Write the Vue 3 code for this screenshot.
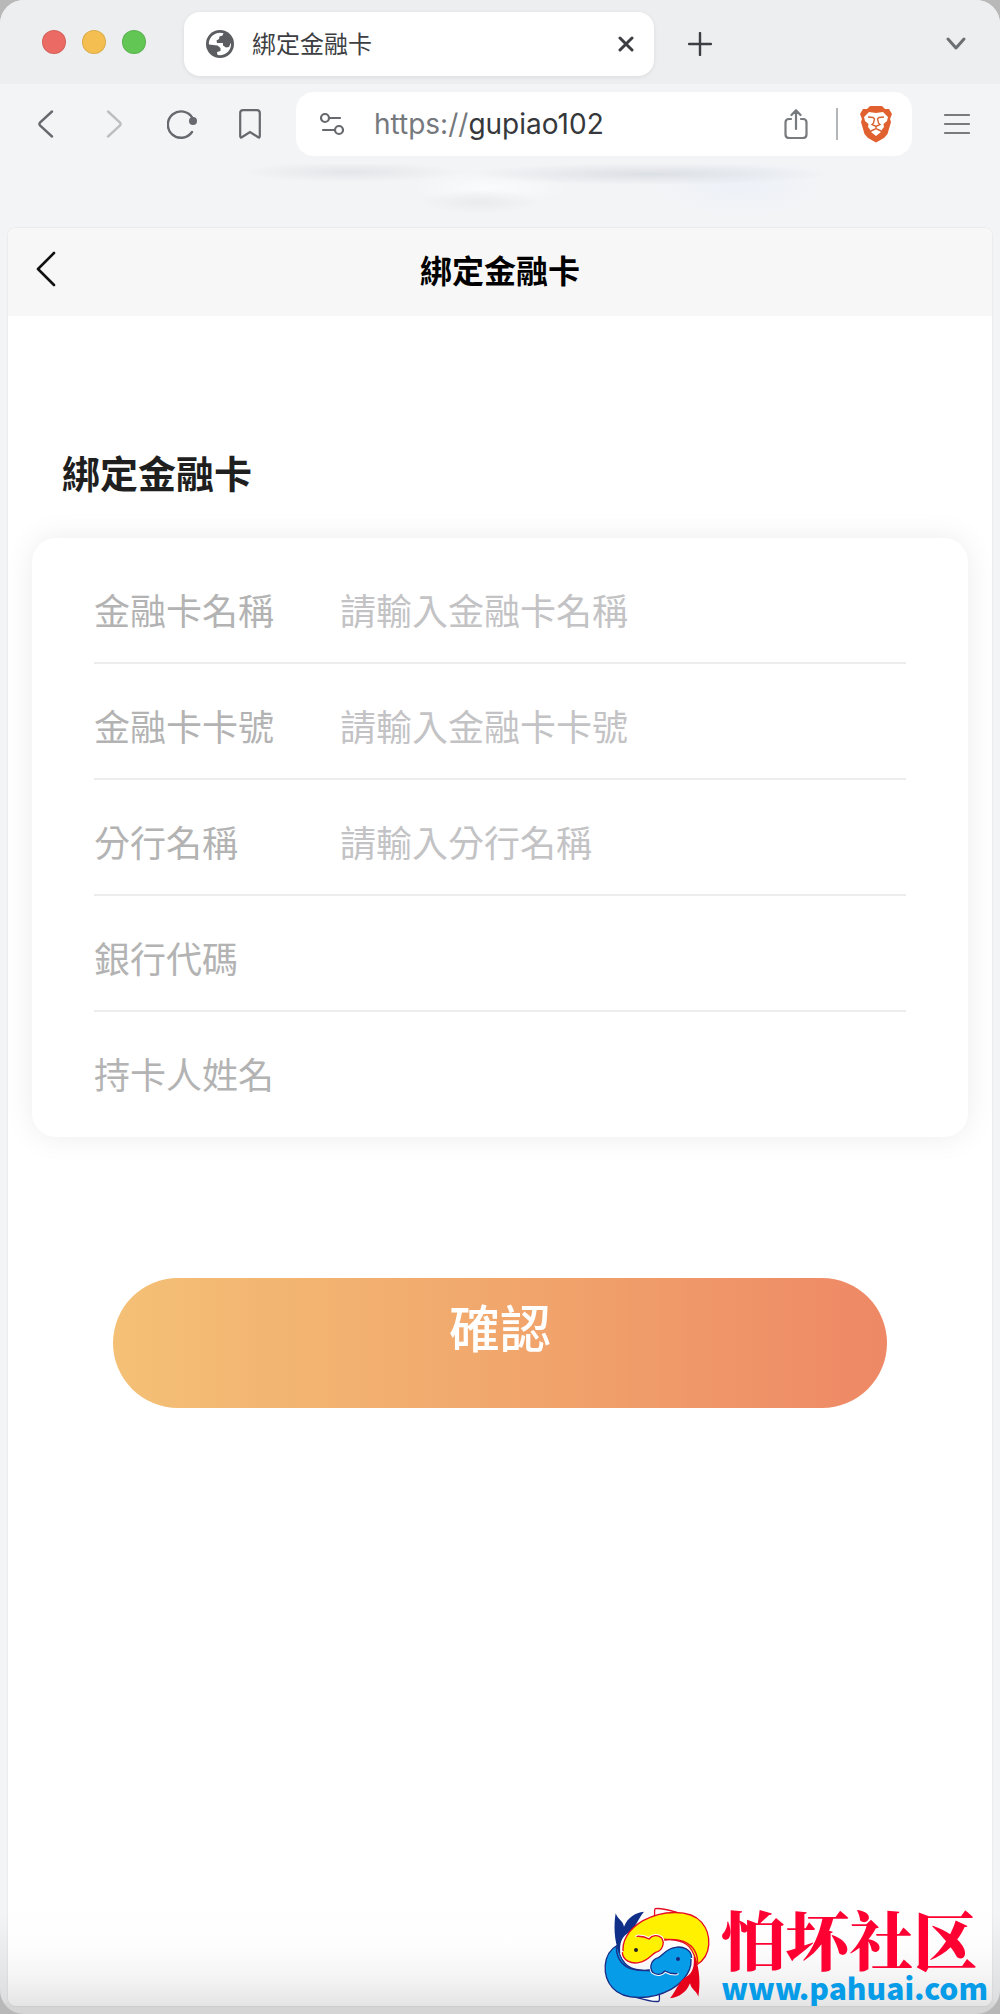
<script setup>
import { reactive } from 'vue'

const fields = reactive([
  { id: 'card-name', label: '金融卡名稱', placeholder: '請輸入金融卡名稱', value: '' },
  { id: 'card-number', label: '金融卡卡號', placeholder: '請輸入金融卡卡號', value: '' },
  { id: 'branch-name', label: '分行名稱', placeholder: '請輸入分行名稱', value: '' },
  { id: 'bank-code', label: '銀行代碼', placeholder: '', value: '' },
  { id: 'holder-name', label: '持卡人姓名', placeholder: '', value: '' }
])
</script>

<template>
  <div class="desktop">
    <div class="window">
      <div class="tabs">
        <div class="lights">
          <button class="light red" aria-label="Close"></button>
          <button class="light yellow" aria-label="Minimize"></button>
          <button class="light green" aria-label="Zoom"></button>
        </div>
        <div class="tab">
          <svg class="globe" width="28" height="28" viewBox="0 0 28 28">
            <circle cx="14" cy="14" r="14" fill="#5b5d61" />
            <path d="M2.800 13C3.500 7 8.500 2.800 14 2.800L17.500 3.300L16.500 5.500L13.500 6.500L13 9L10.500 10.500L11 13H17V15.500L20 17.500L23 17L25 12.500C25.800 19 21 25 14.500 25.200L11.500 25L11 22L14.500 21L14.500 18L11.500 15.500L7 15L3 14.500Z" fill="#fff" />
          </svg>
          <span class="tab-title">綁定金融卡</span>
          <button class="icon" aria-label="Close tab">
            <svg width="16" height="16" viewBox="0 0 16 16"><path d="M2 2L14 14M14 2L2 14" stroke="#3c3e42" stroke-width="3" stroke-linecap="round" /></svg>
          </button>
        </div>
        <button class="icon plus" aria-label="New tab">
          <svg width="24" height="24" viewBox="0 0 24 24"><path d="M12 1V23M1 12H23" stroke="#3c3e42" stroke-width="2.400" stroke-linecap="round" /></svg>
        </button>
        <button class="icon more" aria-label="Search tabs">
          <svg width="20" height="14" viewBox="0 0 20 14"><path d="M2 2L10 11L18 2" fill="none" stroke="#6b6f72" stroke-width="3" stroke-linecap="round" stroke-linejoin="round" /></svg>
        </button>
      </div>

      <div class="toolbar">
        <div class="nav">
          <button class="icon" aria-label="Back">
            <svg width="16" height="28" viewBox="0 0 16 28"><path d="M14 1.500L2 12.500Q.8 14 2 15.500L14 26.500" fill="none" stroke="#66696d" stroke-width="2.400" stroke-linecap="round" /></svg>
          </button>
          <button class="icon" aria-label="Forward">
            <svg width="16" height="28" viewBox="0 0 16 28"><path d="M2 1.500L14 12.500Q15.200 14 14 15.500L2 26.500" fill="none" stroke="#bcbec1" stroke-width="2.400" stroke-linecap="round" /></svg>
          </button>
          <button class="icon" aria-label="Reload">
            <svg width="30" height="30" viewBox="0 0 30 30"><path d="M25.500 9A13.200 13.200 0 1 0 25 23" fill="none" stroke="#66696d" stroke-width="2.400" stroke-linecap="round" /><circle cx="26" cy="12" r="4" fill="#66696d" /></svg>
          </button>
          <button class="icon" aria-label="Bookmark">
            <svg width="22" height="30" viewBox="0 0 22 30"><path d="M1.200 27V4Q1.200 1.200 4 1.200H18Q20.800 1.200 20.800 4V27Q20.800 29.500 18.800 28L11 23L3.200 28Q1.200 29.500 1.200 27Z" fill="none" stroke="#66696d" stroke-width="2.200" /></svg>
          </button>
        </div>
        <div class="address">
          <svg class="tune" width="24" height="24" viewBox="0 0 24 24" fill="none" stroke="#66696d" stroke-width="2.200"><circle cx="5" cy="6" r="4" /><path d="M9 6H20M3 18H15" stroke-linecap="round" /><circle cx="19" cy="18" r="4" /></svg>
          <span class="url"><span class="scheme">https://</span>gupiao102</span>
          <button class="icon" aria-label="Share">
            <svg width="24" height="30" viewBox="0 0 24 30" fill="none" stroke="#777b7e" stroke-width="2.200" stroke-linecap="round" stroke-linejoin="round"><path d="M7 10H5Q1.500 10 1.500 13.500V25.500Q1.500 29 5 29H19Q22.500 29 22.500 25.500V13.500Q22.500 10 19 10H17M12 20V1.500M7.500 6L12 1.200L16.500 6" /></svg>
          </button>
          <span class="divider"></span>
          <button class="icon" aria-label="Shields">
            <svg width="32" height="38" viewBox="0 0 32 38">
              <path d="M10 1H22L25 4L29 4L32 9L30 14L31 17L27.500 29L24 33L16 37.500L8 33L4.500 29L1 17L2 14L0 9L3 4H7Z" fill="#e0602f" />
              <path d="M9 7L16 8L23 7L28 12L27 16L23.500 19L24 22L22 24.500L21 27L16 31L11 27L10 24.500L8 22L8.500 19L5 16L4 12Z" fill="#fff" />
              <path d="M8 12L13 12.500L14.500 14L13.500 18L12 19.500L16 21.500L20 19.500L18.500 18L17.500 14L19 12.500L24 12M16 21V24M10 26.500L16 23.500L22 26.500" fill="none" stroke="#d9632f" stroke-width="1.400" />
            </svg>
          </button>
        </div>
        <button class="icon menu" aria-label="Menu">
          <svg width="26" height="22" viewBox="0 0 26 22"><path d="M1 2H25M1 11H25M1 20H25" stroke="#777b7e" stroke-width="2.200" stroke-linecap="round" /></svg>
        </button>
      </div>
      <div class="haze"></div>

      <main class="page">
        <header class="page-head">
          <button class="icon" aria-label="返回">
            <svg width="20" height="36" viewBox="0 0 20 36"><path d="M18 2L2 18L18 34" fill="none" stroke="#111" stroke-width="2.600" stroke-linecap="round" stroke-linejoin="round" /></svg>
          </button>
          <h1>綁定金融卡</h1>
        </header>
        <form @submit.prevent>
          <h2>綁定金融卡</h2>
          <div class="card">
            <div v-for="field in fields" :key="field.id" class="row">
              <label :for="field.id">{{ field.label }}</label>
              <input :id="field.id" v-model="field.value" type="text" :placeholder="field.placeholder" />
            </div>
          </div>
          <button class="submit" type="submit">確認</button>
        </form>
      </main>
    </div>

    <a class="brand" href="#">
      <svg width="120" height="114" viewBox="0 0 360 342">
        <defs>
          <path id="fin" d="M118 292C145 300 170 307 185 304C191 300 183 280 190 262" />
          <path id="body" d="M62 135C14 162 16 228 46 263C82 305 168 298 222 268C264 244 290 205 280 166C262 146 228 148 208 160C192 170 185 188 166 206C150 215 105 213 84 190C70 174 64 158 62 135Z" />
          <path id="jaw" d="M58 142C58 180 82 203 112 209C135 214 155 210 172 213" />
          <path id="head" d="M284 172C282 148 258 138 235 142C208 146 198 165 184 173C162 179 156 202 167 217C178 226 194 225 204 213C214 219 224 222 240 221" />
          <path id="tail" d="M66 158C51 120 50 75 56 40C62 58 78 62 81 80C92 52 114 38 141 35C123 55 115 88 90 101C74 112 67 130 70 160Z" />
        </defs>
        <g stroke-width="4" stroke-linejoin="round" stroke-linecap="round">
          <g stroke="#1b2d86">
            <use href="#fin" fill="#fff" />
            <use href="#body" fill="#079ce8" />
            <use href="#jaw" fill="none" />
            <use href="#tail" fill="#102f88" stroke="none" />
            <use href="#head" fill="none" stroke="#fff" stroke-width="10" />
            <use href="#head" fill="#079ce8" />
            <circle cx="243" cy="177" r="4" fill="#111d57" />
          </g>
          <g stroke="#e60c22" transform="rotate(180 180 165)">
            <use href="#fin" fill="#fff" />
            <use href="#body" fill="#fff100" />
            <use href="#jaw" fill="none" />
            <use href="#tail" fill="#e60019" stroke="none" />
            <use href="#head" fill="none" stroke="#fff" stroke-width="10" />
            <use href="#head" fill="#fff100" />
            <circle cx="243" cy="180" r="4" fill="#222" stroke="#222" />
          </g>
        </g>
      </svg>
      <span class="brand-text">
        <span class="brand-name" lang="zh-Hans">怕坏社区</span>
        <span class="brand-url">www.pahuai.com</span>
      </span>
    </a>
  </div>
</template>

<style>
body {
  margin: 0;
  background: #c4c4c4;
}
</style>

<style scoped>
* {
  box-sizing: border-box;
}

.desktop {
  position: relative;
  min-height: 100vh;
  display: flex;
  background: #b9b8b8;
  font-family: "Noto Sans CJK TC", sans-serif;
}

.window {
  flex: 1;
  min-width: 0;
  display: flex;
  flex-direction: column;
  padding-bottom: 8px;
  border-radius: 24px;
  overflow: hidden;
  background: linear-gradient(to top, #d5d5d5 8px, #dedfe0 16px, #f3f4f6 100px);
}

.icon {
  display: flex;
  justify-content: center;
  padding: 0;
  border: 0;
  background: none;
}

.tabs {
  display: flex;
  align-items: center;
  height: 84px;
  padding: 4px 34px 0 42px;
  background: #edeef0;
}

.lights {
  display: flex;
  gap: 16px;
  padding-bottom: 4px;
}

.light {
  width: 24px;
  height: 24px;
  padding: 0;
  border: 1px solid #0000001a;
  border-radius: 50%;
}

.red {
  background: #ec6a64;
}

.yellow {
  background: #f4bf50;
}

.green {
  background: #62c655;
}

.tab {
  display: flex;
  align-items: center;
  width: 470px;
  height: 64px;
  margin-left: 38px;
  padding: 0 20px 0 22px;
  border-radius: 16px;
  background: #fff;
  box-shadow: 0 1px 4px #00000014;
}

.tab-title {
  flex: 1;
  margin-left: 18px;
  padding-bottom: 2px;
  font-size: 24px;
  line-height: 32px;
  color: #3c3e42;
}

.plus {
  margin-left: 34px;
}

.more {
  margin-left: auto;
}

.toolbar {
  display: flex;
  align-items: center;
  height: 80px;
  padding: 0 30px 0 12px;
  background: #f3f4f6;
}

.nav {
  display: flex;
  align-items: center;
}

.nav .icon {
  width: 68px;
}

.address {
  flex: 1;
  display: flex;
  align-items: center;
  height: 64px;
  margin: 0 32px 0 12px;
  padding: 0 20px 0 24px;
  border-radius: 18px;
  background: #fff;
}

.url {
  flex: 1;
  margin-left: 30px;
  font-family: Inter, sans-serif;
  font-size: 28px;
  line-height: 32px;
  color: #36383b;
}

.scheme {
  color: #75787c;
}

.divider {
  width: 2px;
  height: 32px;
  margin: 0 22px 0 28px;
  background: #b4b7ba;
}

.haze {
  height: 64px;
  background:
    radial-gradient(ellipse 110px 10px at 35% 8px, #e3e5e8, #e3e5e800),
    radial-gradient(ellipse 180px 11px at 65% 10px, #dcdfe4, #dcdfe400),
    radial-gradient(ellipse 60px 12px at 48% 38px, #e9ebed, #e9ebed00),
    radial-gradient(ellipse 80px 16px at 49% 24px, #fafbfc, #fafbfc00),
    radial-gradient(ellipse 90px 34px at 74% 20px, #edf1f8, #edf1f800),
    #f3f4f6;
}

.page {
  flex: 1;
  margin: 0 8px;
  border-radius: 8px;
  background: linear-gradient(to top, #e5e5e5, #f5f5f5 30px, #fdfdfd 60px, #fff 100px);
  box-shadow: 0 0 2px #0000001f;
}

.page-head {
  display: grid;
  grid-template-columns: 60px 1fr 60px;
  align-items: center;
  height: 88px;
  padding: 0 28px 6px;
  border-radius: 8px 8px 0 0;
  background: #f7f7f8;
}

.page-head .icon {
  justify-content: flex-start;
}

h1 {
  margin: 0;
  text-align: center;
  font-size: 32px;
  line-height: 48px;
  font-weight: 700;
  color: #000;
}

form {
  display: flex;
  flex-direction: column;
  padding: 126px 24px 0;
}

h2 {
  margin: 0 0 36px;
  padding-left: 30px;
  font-size: 38px;
  line-height: 60px;
  font-weight: 700;
  color: #1f1f1f;
}

.card {
  padding: 10px 62px 9px;
  border-radius: 24px;
  background: #fff;
  box-shadow: 0 0 30px #00000014;
}

.row {
  display: flex;
  align-items: center;
  height: 116px;
  padding-top: 8px;
  border-bottom: 2px solid #ededee;
}

.row:last-child {
  border-bottom-color: transparent;
}

label {
  flex: none;
  width: 246px;
  font-size: 36px;
  line-height: 54px;
  color: #b3b3b3;
}

input {
  flex: 1;
  min-width: 0;
  height: 54px;
  padding: 0;
  border: 0;
  outline: 0;
  background: none;
  font: inherit;
  font-size: 36px;
  color: #333;
}

input::placeholder {
  color: #c3c3c5;
  opacity: 1;
}

.submit {
  height: 130px;
  margin: 141px 81px 80px;
  padding: 0 0 34px;
  border: 0;
  border-radius: 65px;
  background: linear-gradient(to right, #f4c076, #f1a76c 50%, #ee8866);
  font-family: inherit;
  font-size: 51px;
  line-height: 72px;
  font-weight: 500;
  color: #fff;
}

.brand {
  position: absolute;
  right: 12px;
  bottom: 0;
  display: flex;
  text-decoration: none;
}

.brand-text {
  display: flex;
  flex-direction: column;
  margin-left: 4px;
}

.brand-name {
  font-family: "Noto Serif CJK SC", "Noto Sans CJK SC", serif;
  font-size: 64px;
  line-height: 74px;
  font-weight: 900;
  color: #ff0033;
}

.brand-url {
  font-family: "Noto Sans CJK SC", sans-serif;
  font-size: 30px;
  line-height: 26px;
  font-weight: 900;
  color: #079ce8;
}
</style>
